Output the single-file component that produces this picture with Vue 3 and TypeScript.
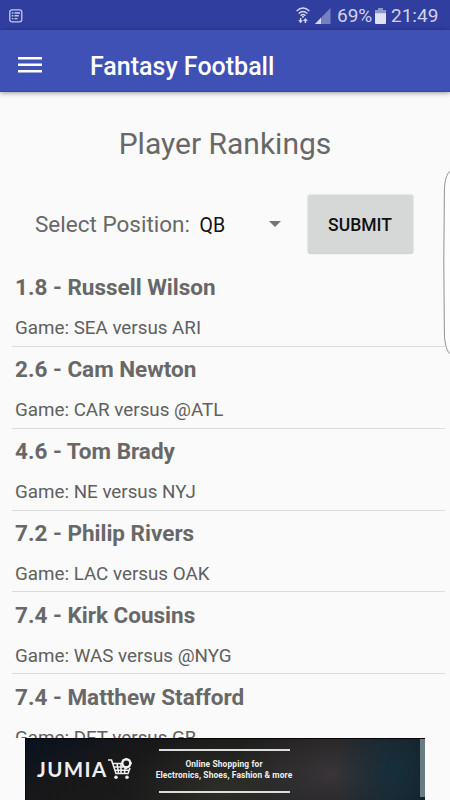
<script setup lang="ts">
import { ref } from 'vue'

interface Player {
  rank: string
  name: string
  game: string
}

const position = ref('QB')
const players: Player[] = [
  { rank: '1.8', name: 'Russell Wilson', game: 'SEA versus ARI' },
  { rank: '2.6', name: 'Cam Newton', game: 'CAR versus @ATL' },
  { rank: '4.6', name: 'Tom Brady', game: 'NE versus NYJ' },
  { rank: '7.2', name: 'Philip Rivers', game: 'LAC versus OAK' },
  { rank: '7.4', name: 'Kirk Cousins', game: 'WAS versus @NYG' },
  { rank: '7.4', name: 'Matthew Stafford', game: 'DET versus GB' },
]
</script>

<template>
  <div class="screen">
    <div class="status">
      <svg class="note" width="14" height="14" viewBox="0 0 14 14" fill="none" stroke="#c3c7e6">
        <rect x="0.8" y="0.8" width="12" height="12" rx="2.4" stroke-width="1.3" />
        <path d="M2.8 4h1.6M5.5 4h5.5M2.8 6.8h1.6M5.5 6.8h4.3M2.8 9.6h1.6M5.5 9.6h3" stroke-width="1.4" />
      </svg>
      <svg class="wifi" width="14" height="17" viewBox="0 0 14 17" fill="none" stroke="#d3d6ee">
        <path d="M.6 4Q7-1.8 13.4 4M2.6 6.5Q7 2.5 11.4 6.5M4.6 8.8Q7 6.4 9.4 8.8" stroke-width="1.4" />
        <circle cx="7" cy="9.8" r="1" fill="#d3d6ee" stroke="none" />
        <path d="M4.6 11v3M9.4 13v3" stroke-width="1.5" />
        <path d="M2.2 13.2h4.8L4.6 16.2zM7 14l2.4-3 2.4 3z" fill="#d3d6ee" stroke="none" />
      </svg>
      <svg class="signal" width="16" height="16" viewBox="0 0 16 16">
        <path d="M0 16 15.5 0V16z" fill="#7680bf" />
        <path d="M0 16 6 9.8V16z" fill="#d5d8ee" />
      </svg>
      <span class="pct">69%</span>
      <svg class="battery" width="11" height="16" viewBox="0 0 11 16">
        <path d="M3 0h5v2h3v4H0V2h3z" fill="#8f96ca" />
        <path d="M0 5.3h11V15a1 1 0 0 1-1 1H1a1 1 0 0 1-1-1z" fill="#e0e2f2" />
      </svg>
      <span class="clock">21:49</span>
    </div>

    <header class="toolbar">
      <svg width="24" height="16" viewBox="0 0 24 16" fill="#fff">
        <path d="M0 0h24v2.5H0zM0 6.5h24V9H0zM0 13h24v2.5H0z" />
      </svg>
      <h1>Fantasy Football</h1>
    </header>

    <main class="content">
      <h2><span>Player Rankings</span></h2>
      <div class="filter">
        <span class="label">Select Position:</span>
        <div class="spinner">
          <span>{{ position }}</span>
          <svg width="12" height="6" viewBox="0 0 12 6"><path d="M0 0h12L6 6z" fill="#757575" /></svg>
        </div>
        <button class="submit" type="button">SUBMIT</button>
      </div>
      <ul class="list">
        <li v-for="p in players" :key="p.name">
          <strong>{{ p.rank }} - {{ p.name }}</strong>
          <span>Game: {{ p.game }}</span>
        </li>
      </ul>
    </main>

    <svg class="edge" width="8" height="188" viewBox="0 0 8 188">
      <path d="M8 2C3.5 6 1.8 12 1.4 22Q.2 94 1.4 166C1.8 176 3.5 183 8 187" fill="#fdfdfd" stroke="#929292" stroke-width="1" />
    </svg>

    <aside class="ad">
      <div class="brand">
        <span>JUMIA</span>
        <svg width="25" height="22" viewBox="0 0 25 22" fill="none" stroke="#eee" stroke-width="1.6">
          <path d="M0 2h3.5L8 15.5h12L22 10M4.5 5.5H14M6 9h9M7 12.3h13.5M9 5l1.5 10M13 5v10M17 10l-.5 5.5" />
          <circle cx="18.3" cy="5.3" r="4" stroke-width="2.4" />
          <path d="m18.3 0v1.5M18.3 9v2M13 5.3h1.5M22 5.3h2M14.6 1.6l1 1M21 8l1 1M22 1.6l-1 1" stroke-width="1.6" />
          <circle cx="8" cy="19.3" r="1.8" fill="#eee" stroke="none" />
          <circle cx="19" cy="19.3" r="1.8" fill="#eee" stroke="none" />
        </svg>
      </div>
      <div class="pitch">
        <p class="line1">Online Shopping for</p>
        <p class="line2">Electronics, Shoes, Fashion &amp; more</p>
      </div>
      <div class="strip"></div>
    </aside>
  </div>
</template>

<style>
body {
  background: #fafafa;
}
</style>

<style scoped>
.screen {
  position: relative;
  display: flex;
  flex-direction: column;
  width: 450px;
  height: 800px;
  overflow: hidden;
  background: #fafafa;
  font-family: Roboto, 'Liberation Sans', sans-serif;
  color: #686868;
}
h1, h2, p, ul {
  margin: 0;
  padding: 0;
}
.status {
  display: flex;
  align-items: center;
  flex: none;
  box-sizing: border-box;
  height: 30px;
  padding: 1px 11px 0 9px;
  background: #303f9f;
  color: #d0d3eb;
  font-size: 19px;
  line-height: 30px;
  white-space: nowrap;
}
.wifi {
  margin-left: 273px;
}
.signal {
  margin-left: 5px;
}
.pct {
  width: 35px;
  margin-left: 6px;
}
.battery {
  margin-left: 3px;
}
.clock {
  margin-left: 5px;
}
.toolbar {
  position: relative;
  display: flex;
  align-items: center;
  flex: none;
  box-sizing: border-box;
  height: 62px;
  padding: 9px 18px 0;
  background: #3f51b5;
  border-bottom: 1px solid #3446ad;
  box-shadow: 0 1px 5px rgba(0, 0, 0, 0.4);
}
.toolbar h1 {
  margin-left: 48px;
  padding-top: 3px;
  color: #fff;
  font-size: 25px;
  font-weight: 500;
  line-height: 30px;
}
.content {
  display: flex;
  flex-direction: column;
  flex: none;
  height: 646px;
  overflow: hidden;
}
h2 {
  flex: none;
  padding-top: 34px;
  font-size: 30px;
  font-weight: 400;
  line-height: 36px;
  text-align: center;
}
.filter {
  display: flex;
  align-items: center;
  flex: none;
  height: 60px;
  margin-top: 32px;
  padding-left: 35px;
}
.label {
  width: 164.5px;
  font-size: 22.5px;
  white-space: nowrap;
}
.spinner {
  display: flex;
  align-items: center;
  justify-content: space-between;
  width: 81.5px;
  color: #111;
  font-size: 19.5px;
}
.spinner span {
  padding-top: 2px;
}
.submit {
  width: 105px;
  height: 58px;
  margin-left: 26.5px;
  padding: 1px 0 0;
  border: 0;
  border-radius: 2px;
  background: #d6d8d7;
  box-shadow: 0 0 2px rgba(0, 0, 0, 0.25), 0 1px 1px rgba(0, 0, 0, 0.1);
  color: #111;
  font: 500 17.5px Roboto, sans-serif;
}
.list {
  flex: none;
  margin: 11px 5px 0 12px;
  list-style: none;
}
.list li {
  display: flex;
  flex-direction: column;
  box-sizing: border-box;
  height: 81.85px;
  padding: 8.4px 3px 0;
  border-bottom: 1.5px solid #dcdcdc;
  white-space: nowrap;
}
.list strong {
  font-size: 22.5px;
  font-weight: 700;
  line-height: 28px;
}
.list span {
  margin-top: 14.9px;
  font-size: 18.8px;
  line-height: 24px;
  color: #606060;
}
.edge {
  position: absolute;
  top: 168px;
  right: -1px;
}
.ad {
  display: flex;
  flex: none;
  box-sizing: border-box;
  width: 400px;
  height: 62px;
  margin-left: 25px;
  border-top: 1px solid #060606;
  border-left: 1px solid #08090b;
  background:
    radial-gradient(ellipse 60px 90px at 370px 30px, rgba(18, 48, 64, 0.8), transparent),
    radial-gradient(ellipse 100px 65px at 305px 35px, #393538, transparent),
    radial-gradient(ellipse 100px 60px at 200px 50px, #2c2e27, transparent),
    linear-gradient(155deg, #08121f, #191819 25%, #1d1c1c 60%, #131d23);
  color: #eee;
}
.brand {
  display: flex;
  flex: none;
  width: 129px;
  padding: 19px 0 0 11px;
  box-sizing: border-box;
}
.brand span {
  flex: none;
  width: 71px;
  font: 700 20.5px/22px Lato, sans-serif;
  letter-spacing: 1.4px;
}
.brand svg {
  flex: none;
}
.pitch {
  flex: none;
  width: 138px;
  height: 45px;
  margin: 9px 0 0;
  box-sizing: border-box;
  padding-top: 11px;
  background:
    linear-gradient(#ddd, #ddd) 4px 1px / 131px 2px no-repeat,
    linear-gradient(#ddd, #ddd) 4px 43px / 131px 2px no-repeat;
  font: 700 8.4px/10.5px Roboto, sans-serif;
  letter-spacing: 0.13px;
  text-align: center;
  white-space: nowrap;
}
.strip {
  width: 5px;
  height: 58px;
  margin-left: auto;
  background: #687c84;
}
</style>
